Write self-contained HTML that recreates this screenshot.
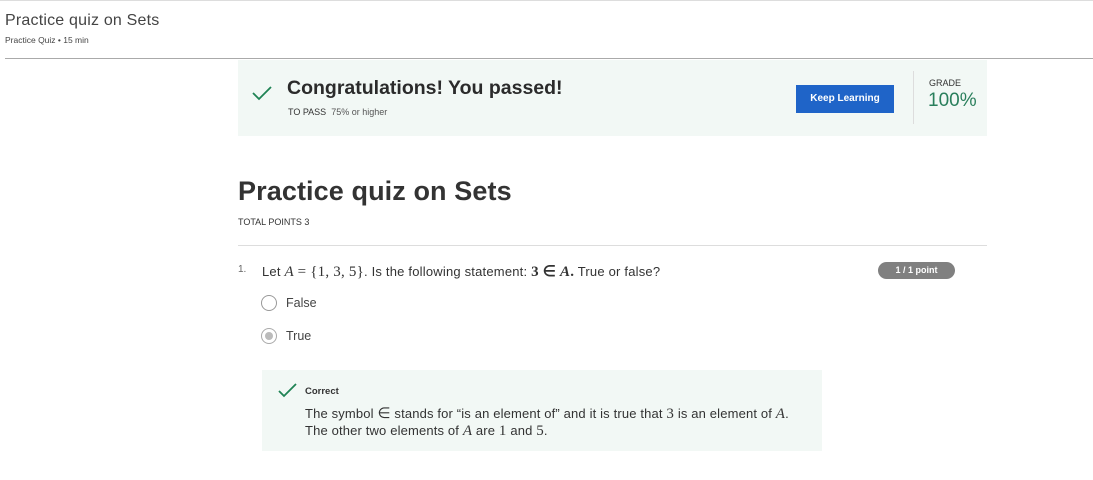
<!DOCTYPE html>
<html><head><style>
body{margin:0;width:1093px;height:480px;background:#fff;font-family:"Liberation Sans",sans-serif;color:#333;position:relative;overflow:hidden}
.a{position:absolute;white-space:nowrap}
.m{font-family:"Liberation Serif",serif;font-style:italic;font-size:15px}
.n{font-family:"Liberation Serif",serif;font-size:15px}
</style></head><body>
<div class="a" style="left:0;top:0;width:1093px;height:1px;background:#ddd"></div>
<div class="a" style="left:5px;top:12px;font-size:16px;color:#444;letter-spacing:.2px">Practice quiz on Sets</div>
<div class="a" style="left:5px;top:35px;font-size:8.5px;color:#444">Practice Quiz • 15 min</div>
<div class="a" style="left:5px;top:58px;width:1088px;height:1px;background:#aaa"></div>

<div class="a" style="left:238px;top:60px;width:749px;height:76px;background:#f2f8f5"></div>
<svg class="a" style="left:251px;top:84px" width="22" height="18" viewBox="0 0 22 18"><path d="M2 9 L8 15 L20 3" fill="none" stroke="#1f8354" stroke-width="1.8"/></svg>
<div class="a" style="left:287px;top:77px;font-size:19.5px;font-weight:bold;color:#2b2b2b">Congratulations! You passed!</div>
<div class="a" style="left:288px;top:107px;font-size:9px;color:#333">TO PASS&nbsp; <span style="color:#555">75% or higher</span></div>
<div class="a" style="left:796px;top:85px;width:98px;height:28px;background:#1f64c8;color:#fff;font-size:10px;font-weight:bold;line-height:28px;text-align:center">Keep Learning</div>
<div class="a" style="left:913px;top:71px;width:1px;height:53px;background:#ddd"></div>
<div class="a" style="left:929px;top:78px;font-size:9px;color:#333">GRADE</div>
<div class="a" style="left:928px;top:90px;font-size:19px;color:#2a7f5c">100%</div>

<div class="a" style="left:238px;top:176px;font-size:27px;font-weight:bold;color:#333;letter-spacing:.1px">Practice quiz on Sets</div>
<div class="a" style="left:238px;top:217px;font-size:9px;color:#333">TOTAL POINTS 3</div>
<div class="a" style="left:238px;top:245px;width:749px;height:1px;background:#ddd"></div>

<div class="a" style="left:238px;top:264px;font-size:10px;color:#666">1.</div>
<div class="a" style="left:262px;top:262px;font-size:13px;color:#333;letter-spacing:.2px">Let <span class="m">A</span> <span class="n">= {1, 3, 5}</span>. Is the following statement: <span class="n" style="font-weight:bold">3 ∈ <i>A</i>.</span> True or false?</div>
<div class="a" style="left:878px;top:262px;width:77px;height:17px;border-radius:9px;background:#808080;color:#fff;font-size:9px;font-weight:bold;text-align:center;line-height:17px">1 / 1 point</div>

<div class="a" style="left:261px;top:295px;width:14px;height:14px;border:1px solid #999;border-radius:50%"></div>
<div class="a" style="left:286px;top:296px;font-size:12.5px;color:#444">False</div>
<div class="a" style="left:261px;top:328px;width:14px;height:14px;border:1px solid #aaa;border-radius:50%"></div>
<div class="a" style="left:265px;top:332px;width:8px;height:8px;background:#bbb;border-radius:50%"></div>
<div class="a" style="left:286px;top:329px;font-size:12.5px;color:#444">True</div>

<div class="a" style="left:262px;top:370px;width:560px;height:81px;background:#f2f8f5"></div>
<svg class="a" style="left:277px;top:382px" width="22" height="17" viewBox="0 0 22 17"><path d="M2 9 L7 14 L19 2" fill="none" stroke="#1f8354" stroke-width="1.8"/></svg>
<div class="a" style="left:305px;top:386px;font-size:9.5px;font-weight:bold;color:#333">Correct</div>
<div class="a" style="left:305px;top:404px;font-size:13px;color:#333;letter-spacing:.15px">The symbol <span class="n">∈</span> stands for “is an element of” and it is true that <span class="n">3</span> is an element of <span class="m">A</span>.</div>
<div class="a" style="left:305px;top:423px;font-size:13px;color:#333;letter-spacing:.15px">The other two elements of <span class="m">A</span> are <span class="n">1</span> and <span class="n">5</span>.</div>
</body></html>
